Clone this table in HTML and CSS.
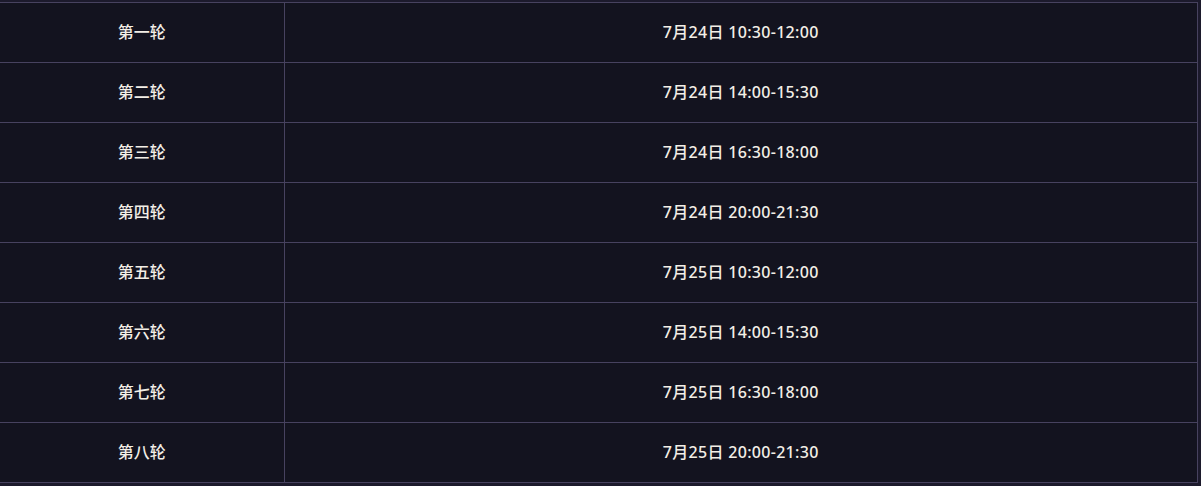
FILE: index.html
```html
<!DOCTYPE html>
<html lang="zh-CN">
<head>
    <meta charset="UTF-8">
    <meta name="viewport" content="width=device-width, initial-scale=1.0">
    <title>赛程安排</title>
    <link rel="stylesheet" href="styles.css">
</head>
<body>
    <div class="schedule">
        <table class="schedule-table">
            <tbody>
                <tr><td class="round">第一轮</td><td class="time">7月24日 10:30-12:00</td></tr>
                <tr><td class="round">第二轮</td><td class="time">7月24日 14:00-15:30</td></tr>
                <tr><td class="round">第三轮</td><td class="time">7月24日 16:30-18:00</td></tr>
                <tr><td class="round">第四轮</td><td class="time">7月24日 20:00-21:30</td></tr>
                <tr><td class="round">第五轮</td><td class="time">7月25日 10:30-12:00</td></tr>
                <tr><td class="round">第六轮</td><td class="time">7月25日 14:00-15:30</td></tr>
                <tr><td class="round">第七轮</td><td class="time">7月25日 16:30-18:00</td></tr>
                <tr><td class="round">第八轮</td><td class="time">7月25日 20:00-21:30</td></tr>
            </tbody>
        </table>
    </div>
</body>
</html>
```

FILE: styles.css
```css
 * {
     box-sizing: border-box;
     margin: 0;
     padding: 0;
 }
 body {
     font-family: "Noto Sans", "Noto Sans CJK SC", sans-serif;
     background-color: #1c1a2c;
     color: #f2eee6;
 }
.schedule {
     padding-top: 2px;
     width: 1198px;
 }
.schedule-table {
     width: 100%;
     border-collapse: collapse;
     background-color: #13131f;
     border-top: 1px solid #47425f;
     border-right: 1px solid #47425f;
 }
.schedule-table td {
     height: 60px;
     padding-bottom: 3px;
     text-align: center;
     vertical-align: middle;
     font-size: 16px;
     font-weight: 500;
     border-bottom: 1px solid #47425f;
 }
.schedule-table .round {
     width: 284px;
     border-right: 1px solid #47425f;
 }
.schedule-table .time {
     letter-spacing: 0.3px;
 }
```
